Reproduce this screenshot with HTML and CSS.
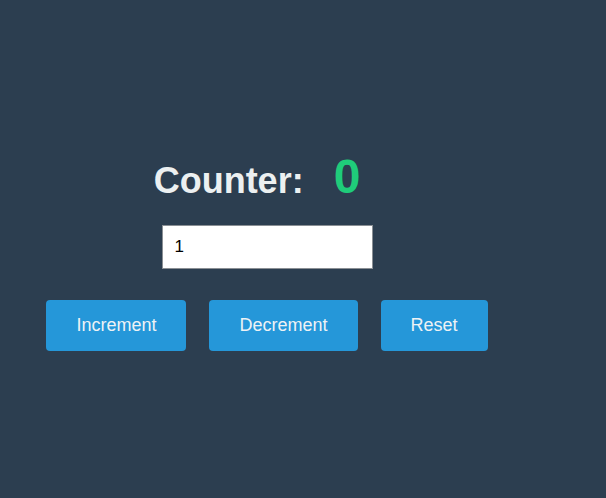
FILE: index.html
```html
<!DOCTYPE html>
<html>
<head>
<meta charset="utf-8">
<link rel="stylesheet" href="styles.css">
</head>
<body>
<div class="app">
  <h1 class="title">Counter: <span class="count">0</span></h1>
  <input class="step" type="text" value="1">
  <div class="actions">
    <button class="btn">Increment</button>
    <button class="btn">Decrement</button>
    <button class="btn">Reset</button>
  </div>
</div>
</body>
</html>
```
FILE: styles.css
```css
html, body {
  margin: 0;
  padding: 0;
  background: #2c3e50;
  height: 100%;
}
body {
  font-family: "Liberation Sans", Arial, sans-serif;
}
.app {
  width: 442px;
  margin-left: 46px;
  padding-top: 149px;
  display: flex;
  flex-direction: column;
  align-items: center;
}
.title {
  margin: 0;
  font-size: 36px;
  font-weight: bold;
  color: #ecf0f1;
  line-height: 56px;
}
.count {
  font-size: 48px;
  color: #1fcc7a;
  padding: 0 20px;
}
.step {
  margin-top: 16px;
  width: 211px;
  height: 44px;
  box-sizing: border-box;
  border: 1px solid #8a8f94;
  background: #fff;
  padding: 0 12px;
  font-family: "Liberation Sans", Arial, sans-serif;
  font-size: 17px;
  color: #000;
  outline: none;
}
.actions {
  margin-top: 31px;
  display: flex;
  gap: 23px;
}
.btn {
  border: none;
  border-radius: 4px;
  background: #2597d9;
  color: #eef2f5;
  font-family: "Liberation Sans", Arial, sans-serif;
  font-size: 18px;
  line-height: 21px;
  padding: 15px 30px;
  cursor: pointer;
}
```
